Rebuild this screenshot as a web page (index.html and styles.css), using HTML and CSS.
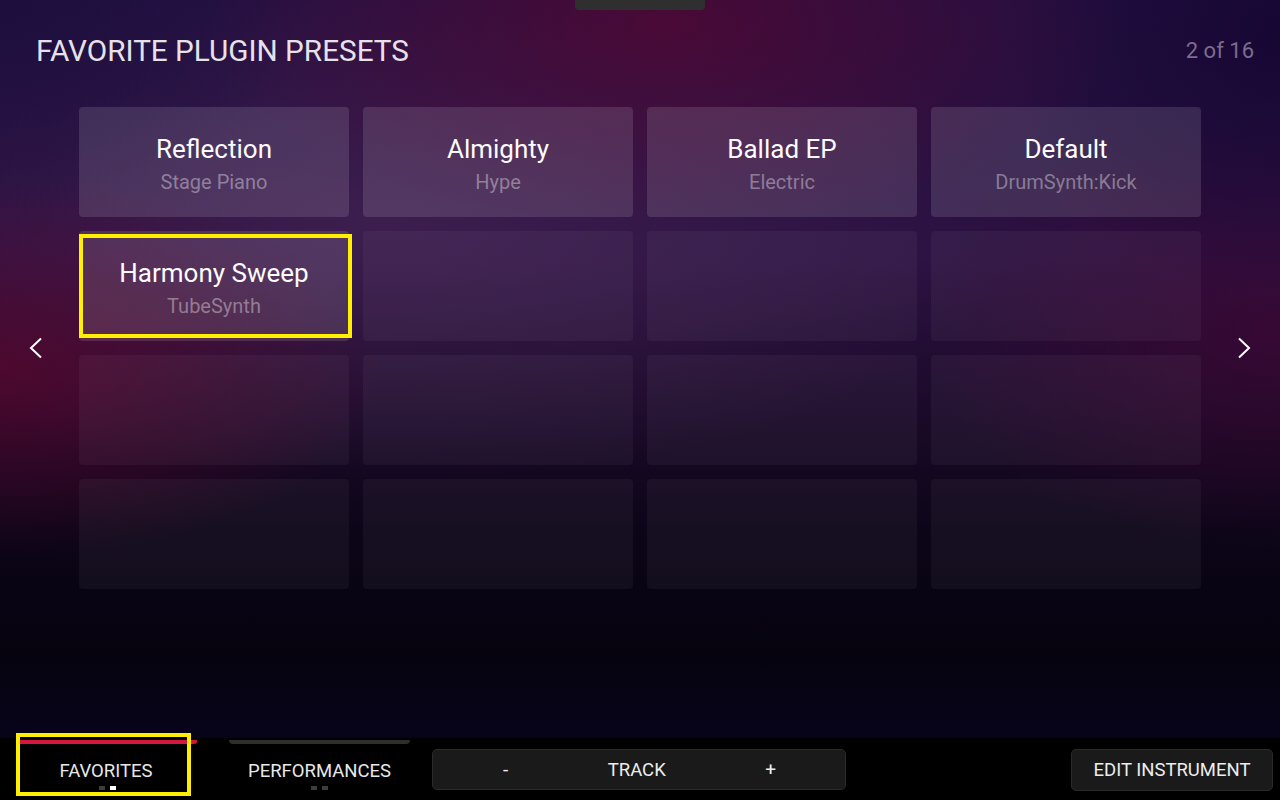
FILE: index.html
```html
<!DOCTYPE html>
<html>
<head>
<meta charset="utf-8">
<link rel="stylesheet" href="styles.css">
</head>
<body>
<div class="screen">
  <div class="top-tab"></div>
  <main class="main">
    <header class="header">
      <h1 class="title">FAVORITE PLUGIN PRESETS</h1>
      <div class="counter">2 of 16</div>
    </header>
    <section class="stage">
      <div class="nav nav-left">
        <svg width="14" height="22" viewBox="0 0 14 22"><polyline points="12,1.5 2,11 12,20.5" fill="none" stroke="#fff" stroke-width="2"/></svg>
      </div>
      <div class="grid">
        <div class="card filled"><div class="name">Reflection</div><div class="sub">Stage Piano</div></div>
        <div class="card filled"><div class="name">Almighty</div><div class="sub">Hype</div></div>
        <div class="card filled"><div class="name">Ballad EP</div><div class="sub">Electric</div></div>
        <div class="card filled"><div class="name">Default</div><div class="sub">DrumSynth:Kick</div></div>
        <div class="card filled selected"><div class="name">Harmony Sweep</div><div class="sub">TubeSynth</div></div>
        <div class="card"></div>
        <div class="card"></div>
        <div class="card"></div>
        <div class="card"></div>
        <div class="card"></div>
        <div class="card"></div>
        <div class="card"></div>
        <div class="card"></div>
        <div class="card"></div>
        <div class="card"></div>
        <div class="card"></div>
      </div>
      <div class="nav nav-right">
        <svg width="14" height="22" viewBox="0 0 14 22"><polyline points="2,1.5 12,11 2,20.5" fill="none" stroke="#fff" stroke-width="2"/></svg>
      </div>
    </section>
  </main>
  <footer class="bar">
    <div class="tab tab-active">
      <div class="tab-line"></div>
      <div class="tab-label">FAVORITES</div>
      <div class="dots"><span class="dot"></span><span class="dot on"></span></div>
    </div>
    <div class="tab tab-perf">
      <div class="tab-line"></div>
      <div class="tab-label">PERFORMANCES</div>
      <div class="dots"><span class="dot"></span><span class="dot"></span></div>
    </div>
    <div class="btn track">
      <span class="pm">-</span>
      <span>TRACK</span>
      <span class="pm">+</span>
    </div>
    <div class="btn edit">EDIT INSTRUMENT</div>
  </footer>
</div>
</body>
</html>
```
FILE: styles.css
```css
*, *::before, *::after { box-sizing: border-box; }
html, body { margin: 0; padding: 0; }
body {
  width: 1280px;
  height: 800px;
  overflow: hidden;
  background: #000;
  font-family: Roboto, "Open Sans", sans-serif;
}
.screen {
  position: relative;
  width: 1280px;
  height: 800px;
  display: flex;
  flex-direction: column;
}
.top-tab {
  position: absolute;
  left: 575px;
  top: 0;
  width: 130px;
  height: 10px;
  background: #2f2f30;
  border-radius: 0 0 4px 4px;
}
.main {
  height: 738px;
  background:
    radial-gradient(ellipse 36% 28% at 52% 3%, rgba(80, 8, 52, 0.85), rgba(80, 8, 52, 0) 100%),
    radial-gradient(ellipse 22% 35% at 100% 5%, rgba(22, 6, 50, 0.9), rgba(22, 6, 50, 0) 100%),
    radial-gradient(ellipse 25% 30% at 0% 0%, rgba(28, 14, 60, 0.8), rgba(28, 14, 60, 0) 100%),
    radial-gradient(ellipse 30% 26% at 0% 50%, rgba(95, 6, 45, 0.7), rgba(95, 6, 45, 0) 100%),
    radial-gradient(ellipse 28% 30% at 100% 45%, rgba(70, 5, 50, 0.55), rgba(70, 5, 50, 0) 100%),
    radial-gradient(ellipse 50% 35% at 30% 30%, rgba(90, 50, 100, 0.4), rgba(90, 50, 100, 0) 100%),
    linear-gradient(180deg, #221042 0%, #2a1040 35%, #1c0a2a 55%, #0c0518 72%, #06030f 88%, #07041a 100%);
}
.header {
  height: 107px;
  display: flex;
  justify-content: space-between;
  align-items: flex-start;
  padding: 33px 26px 0 36px;
}
.title {
  margin: 0;
  font-weight: 400;
  font-size: 29.7px;
  line-height: 36px;
  color: #e6e2ea;
  letter-spacing: 0;
}
.counter {
  font-size: 22px;
  line-height: 36px;
  color: #7d6c8c;
}
.stage {
  display: flex;
  align-items: center;
}
.nav {
  width: 79px;
  height: 30px;
  display: flex;
  align-items: center;
}
.nav-left { padding-left: 29px; }
.nav-right { justify-content: flex-end; padding-right: 29px; }
.nav svg { display: block; }
.grid {
  width: 1122px;
  display: grid;
  grid-template-columns: repeat(4, 270px);
  grid-auto-rows: 110px;
  gap: 14px;
}
.card {
  position: relative;
  border-radius: 4px;
  background: rgba(255, 255, 255, 0.045);
  display: flex;
  flex-direction: column;
  align-items: center;
  justify-content: center;
  padding-top: 4px;
  gap: 4px;
}
.card.filled { background: rgba(255, 255, 255, 0.12); }
.name {
  font-size: 26px;
  line-height: 32px;
  color: #fbfbfd;
}
.sub {
  font-size: 20px;
  line-height: 26px;
  color: rgba(255, 255, 255, 0.38);
}
.selected::after {
  content: "";
  position: absolute;
  left: 0;
  right: -3px;
  top: 3px;
  bottom: 3px;
  border: 4px solid #fff000;
}
.bar {
  height: 62px;
  background: #000;
  display: flex;
  align-items: flex-start;
  padding-left: 20px;
  padding-right: 7px;
}
.tab {
  position: relative;
  height: 62px;
  display: flex;
  flex-direction: column;
  align-items: center;
  padding-top: 2px;
}
.tab-active { width: 177px; }
.tab-perf { width: 181px; margin-left: 32px; }
.tab-line {
  width: 100%;
  height: 4px;
}
.tab-active .tab-line {
  background: #d3173f;
  border-radius: 0 0 3px 0;
}
.tab-perf .tab-line {
  background: #2e2e30;
  border-radius: 0 0 4px 4px;
}
.tab-label {
  margin-top: 16px;
  font-size: 18.5px;
  line-height: 22px;
  color: #e8e8e8;
}
.tab-active .tab-label { margin-left: -5px; }
.dots {
  display: flex;
  gap: 5px;
  margin-top: 4px;
}
.tab-active .dots { margin-left: -3px; }
.dot {
  width: 6px;
  height: 4px;
  background: #3d3d40;
}
.dot.on { background: #ffffff; }
.tab-active::after {
  content: "";
  position: absolute;
  left: -4px;
  top: -5px;
  width: 175px;
  height: 63px;
  border: 4px solid #ffee00;
}
.btn {
  margin-top: 11px;
  height: 41px;
  background: #1a1a1b;
  border: 1px solid #2a2a2b;
  border-radius: 5px;
  color: #ededed;
  font-size: 18.5px;
  display: flex;
  align-items: center;
}
.track {
  width: 414px;
  margin-left: 22px;
  justify-content: space-between;
  padding: 0 69px 0 70px;
}
.pm { font-size: 19px; }
.edit {
  margin-left: auto;
  width: 202px;
  height: 42px;
  justify-content: center;
}
```
